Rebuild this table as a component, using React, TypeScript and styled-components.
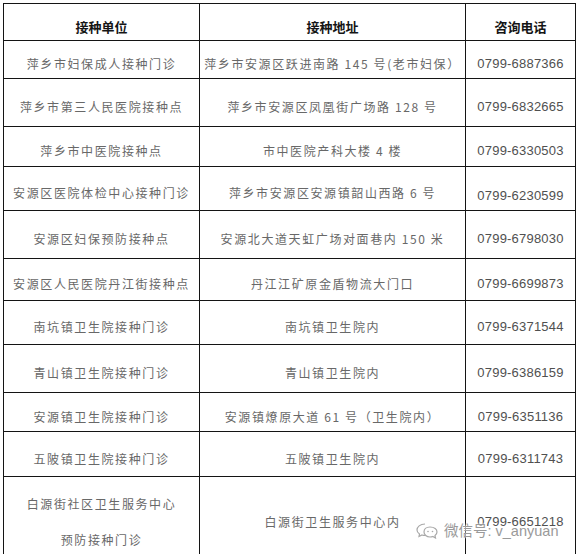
import React from "react";
import styled, { createGlobalStyle } from "styled-components";

const Global = createGlobalStyle`
  html, body { margin: 0; padding: 0; background: #fff; }
  body { font-family: "Noto Sans CJK SC", "Liberation Sans", sans-serif; }
`;

const Page = styled.div`
  position: relative;
  width: 576px;
  height: 554px;
  padding: 3px 0 0 3px;
  box-sizing: border-box;
  background: #fff;
`;

const Table = styled.table`
  border-collapse: collapse;
  table-layout: fixed;
  width: 572px;
`;

const Row = styled.tr<{ $h: number }>`
  height: ${(p) => p.$h}px;
`;

const HeadCell = styled.th`
  border: 1px solid #141414;
  padding: 9px 0 0 0;
  vertical-align: middle;
  text-align: center;
  font-family: "Noto Sans CJK SC", sans-serif;
  font-weight: 700;
  font-size: 13px;
  color: #151515;
  line-height: 16px;
`;

const Cell = styled.td<{ $lh?: number; $shift?: number }>`
  border: 1px solid #141414;
  padding: ${(p) => 9 + (p.$shift || 0)}px 0 0 0;
  vertical-align: middle;
  text-align: center;
  font-family: "Noto Sans CJK SC", sans-serif;
  font-weight: 400;
  font-size: 12px;
  letter-spacing: 1.6px;
  color: #686868;
  line-height: ${(p) => p.$lh || 16}px;
  white-space: nowrap;
`;

const Phone = styled(Cell)`
  font-family: "Liberation Sans", sans-serif;
  font-size: 13px;
  letter-spacing: 0.2px;
  color: #505050;
`;

const Watermark = styled.div`
  position: absolute;
  left: 416px;
  top: 519px;
  display: flex;
  align-items: center;
  gap: 4px;
  font-family: "Liberation Sans", "Noto Sans CJK SC", sans-serif;
  font-size: 14.5px;
  color: #9a9a9a;
  text-shadow: 0 0 2px #fff, 0 0 2px #fff;
  white-space: nowrap;
`;

const Icon = () => (
  <svg width="24" height="18" viewBox="0 0 24 18" fill="none" stroke="#a8a8a8" strokeWidth="1.2">
    <path d="M9 3 C4 3 1 6 1 9 C1 11 2 12 3.5 13 L3 15.5 L6 14 C7 14.3 8 14.5 9 14.5" />
    <path d="M14 6 C10 6 8 8.5 8 11 C8 13.5 10.5 16 14 16 C15 16 16 15.8 16.8 15.5 L19.5 17 L19 14.5 C20.3 13.5 21 12.3 21 11 C21 8.5 18.5 6 14 6 Z" />
    <circle cx="12" cy="10.5" r="0.8" fill="#a8a8a8" stroke="none" />
    <circle cx="16.5" cy="10.5" r="0.8" fill="#a8a8a8" stroke="none" />
  </svg>
);

type R = { h: number; unit: React.ReactNode; addr: string; tel: string; unitLh?: number; telShift?: number };

const rows: R[] = [
  { h: 38, unit: "萍乡市妇保成人接种门诊", addr: "萍乡市安源区跃进南路 145 号(老市妇保）", tel: "0799-6887366" },
  { h: 48, unit: "萍乡市第三人民医院接种点", addr: "萍乡市安源区凤凰街广场路 128 号", tel: "0799-6832665" },
  { h: 40, unit: "萍乡市中医院接种点", addr: "市中医院产科大楼 4 楼", tel: "0799-6330503" },
  { h: 44, unit: "安源区医院体检中心接种门诊", addr: "萍乡市安源区安源镇韶山西路 6 号", tel: "0799-6230599", telShift: 6 },
  { h: 48, unit: "安源区妇保预防接种点", addr: "安源北大道天虹广场对面巷内 150 米", tel: "0799-6798030" },
  { h: 42, unit: "安源区人民医院丹江街接种点", addr: "丹江江矿原金盾物流大门口", tel: "0799-6699873" },
  { h: 44, unit: "南坑镇卫生院接种门诊", addr: "南坑镇卫生院内", tel: "0799-6371544" },
  { h: 48, unit: "青山镇卫生院接种门诊", addr: "青山镇卫生院内", tel: "0799-6386159" },
  { h: 39, unit: "安源镇卫生院接种门诊", addr: "安源镇燎原大道 61 号（卫生院内）", tel: "0799-6351136" },
  { h: 45, unit: "五陂镇卫生院接种门诊", addr: "五陂镇卫生院内", tel: "0799-6311743" },
  {
    h: 74,
    unit: (
      <>
        白源街社区卫生服务中心
        <br />
        预防接种门诊
      </>
    ),
    addr: "白源街卫生服务中心内",
    tel: "0799-6651218",
    unitLh: 36,
  },
];

export default function App() {
  return (
    <Page>
      <Global />
      <Table>
        <colgroup>
          <col style={{ width: 196 }} />
          <col style={{ width: 266 }} />
          <col style={{ width: 110 }} />
        </colgroup>
        <tbody>
          <Row $h={37}>
            <HeadCell>接种单位</HeadCell>
            <HeadCell>接种地址</HeadCell>
            <HeadCell>咨询电话</HeadCell>
          </Row>
          {rows.map((r, i) => (
            <Row key={i} $h={r.h}>
              <Cell $lh={r.unitLh}>{r.unit}</Cell>
              <Cell>{r.addr}</Cell>
              <Phone $shift={r.telShift}>{r.tel}</Phone>
            </Row>
          ))}
        </tbody>
      </Table>
      <Watermark>
        <Icon />
        <span>微信号: v_anyuan</span>
      </Watermark>
    </Page>
  );
}
